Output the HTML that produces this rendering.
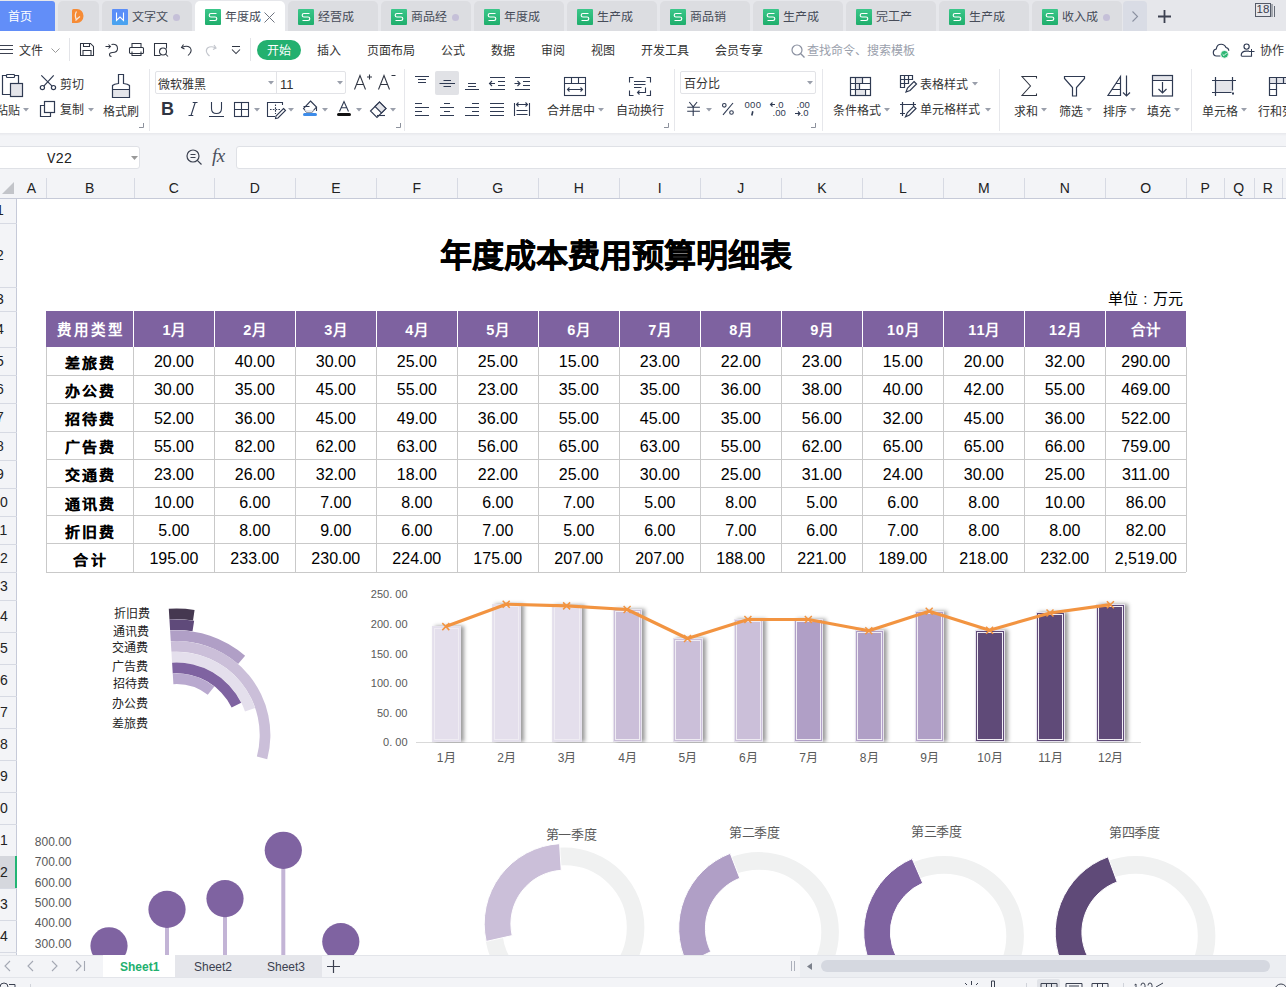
<!DOCTYPE html><html lang="zh-CN"><head><meta charset="utf-8"><style>
*{box-sizing:border-box;margin:0;padding:0}
html,body{width:1286px;height:987px;overflow:hidden;background:#fff;font-family:"Liberation Sans",sans-serif;color:#333}
.abs{position:absolute}
.t{position:absolute;white-space:nowrap;line-height:1}
svg{position:absolute;overflow:visible}

</style></head><body>
<div class="abs" style="left:0;top:0;width:1286px;height:31px;background:#e6e7eb"></div>
<div class="abs" style="left:0;top:1px;width:55px;height:30px;background:#628ef8;border-top-right-radius:3px"></div>
<div class="t" style="left:8px;top:11px;font-size:12px;color:#fff">首页</div>
<div class="abs" style="left:58px;top:1px;width:41px;height:30px;background:#dcdde1;border-radius:5px 5px 0 0"></div>
<svg style="left:71px;top:8px" width="13" height="15" viewBox="0 0 13 15"><path d="M2.5 1 H6 A6.5 7 0 0 1 6 15 H1 V2.5 Q1 1 2.5 1Z" fill="#f68b35"/><path d="M5.5 3.5 Q3.5 6.5 5 11 M4.5 12.5 Q7 10 9 8.5" stroke="#f6e6da" stroke-width="1.3" fill="none"/></svg>
<div class="abs" style="left:102px;top:1px;width:90px;height:30px;background:#dcdde1;border-radius:5px 5px 0 0"></div>
<div class="abs" style="left:112px;top:9px;width:16px;height:16px;background:linear-gradient(#5b8ef8 0,#5b8ef8 68%,#4aa2f0 68%);border-radius:1px"></div>
<svg style="left:112px;top:9px" width="16" height="16" viewBox="0 0 16 16"><path d="M4.5 3.5 V11.5 L8 8 L11.5 11.5 V3.5" stroke="#fff" stroke-width="1.1" fill="none"/></svg>
<div class="t" style="left:132px;top:10.8px;font-size:12px;color:#474c59;width:36px;overflow:hidden">文字文</div>
<div class="abs" style="left:173px;top:14px;width:7px;height:7px;border-radius:50%;background:#c5c0d8"></div>
<div class="abs" style="left:195px;top:1px;width:90px;height:30px;background:#ffffff;border-radius:5px 5px 0 0"></div>
<div class="abs" style="left:205px;top:9px;width:16px;height:16px;background:linear-gradient(#3bc78a,#1fae6c);border-radius:1px"></div>
<svg style="left:205px;top:9px" width="16" height="16" viewBox="0 0 16 16"><path d="M11.5 4.5 H6 Q4.2 4.5 4.2 6.2 Q4.2 8 6 8 H10 Q11.8 8 11.8 9.8 Q11.8 11.5 10 11.5 H4.5" stroke="#fff" stroke-width="1.15" fill="none"/></svg>
<div class="t" style="left:225px;top:10.8px;font-size:12px;color:#474c59;width:36px;overflow:hidden">年度成</div>
<svg style="left:264px;top:12px" width="11" height="11" viewBox="0 0 11 11"><path d="M0.5 0.5 L10.5 10.5 M10.5 0.5 L0.5 10.5" stroke="#6f7480" stroke-width="1"/></svg>
<div class="abs" style="left:288px;top:1px;width:90px;height:30px;background:#dcdde1;border-radius:5px 5px 0 0"></div>
<div class="abs" style="left:298px;top:9px;width:16px;height:16px;background:linear-gradient(#3bc78a,#1fae6c);border-radius:1px"></div>
<svg style="left:298px;top:9px" width="16" height="16" viewBox="0 0 16 16"><path d="M11.5 4.5 H6 Q4.2 4.5 4.2 6.2 Q4.2 8 6 8 H10 Q11.8 8 11.8 9.8 Q11.8 11.5 10 11.5 H4.5" stroke="#fff" stroke-width="1.15" fill="none"/></svg>
<div class="t" style="left:318px;top:10.8px;font-size:12px;color:#474c59;width:36px;overflow:hidden">经营成</div>
<div class="abs" style="left:381px;top:1px;width:90px;height:30px;background:#dcdde1;border-radius:5px 5px 0 0"></div>
<div class="abs" style="left:391px;top:9px;width:16px;height:16px;background:linear-gradient(#3bc78a,#1fae6c);border-radius:1px"></div>
<svg style="left:391px;top:9px" width="16" height="16" viewBox="0 0 16 16"><path d="M11.5 4.5 H6 Q4.2 4.5 4.2 6.2 Q4.2 8 6 8 H10 Q11.8 8 11.8 9.8 Q11.8 11.5 10 11.5 H4.5" stroke="#fff" stroke-width="1.15" fill="none"/></svg>
<div class="t" style="left:411px;top:10.8px;font-size:12px;color:#474c59;width:36px;overflow:hidden">商品经</div>
<div class="abs" style="left:452px;top:14px;width:7px;height:7px;border-radius:50%;background:#c5c0d8"></div>
<div class="abs" style="left:474px;top:1px;width:90px;height:30px;background:#dcdde1;border-radius:5px 5px 0 0"></div>
<div class="abs" style="left:484px;top:9px;width:16px;height:16px;background:linear-gradient(#3bc78a,#1fae6c);border-radius:1px"></div>
<svg style="left:484px;top:9px" width="16" height="16" viewBox="0 0 16 16"><path d="M11.5 4.5 H6 Q4.2 4.5 4.2 6.2 Q4.2 8 6 8 H10 Q11.8 8 11.8 9.8 Q11.8 11.5 10 11.5 H4.5" stroke="#fff" stroke-width="1.15" fill="none"/></svg>
<div class="t" style="left:504px;top:10.8px;font-size:12px;color:#474c59;width:36px;overflow:hidden">年度成</div>
<div class="abs" style="left:567px;top:1px;width:90px;height:30px;background:#dcdde1;border-radius:5px 5px 0 0"></div>
<div class="abs" style="left:577px;top:9px;width:16px;height:16px;background:linear-gradient(#3bc78a,#1fae6c);border-radius:1px"></div>
<svg style="left:577px;top:9px" width="16" height="16" viewBox="0 0 16 16"><path d="M11.5 4.5 H6 Q4.2 4.5 4.2 6.2 Q4.2 8 6 8 H10 Q11.8 8 11.8 9.8 Q11.8 11.5 10 11.5 H4.5" stroke="#fff" stroke-width="1.15" fill="none"/></svg>
<div class="t" style="left:597px;top:10.8px;font-size:12px;color:#474c59;width:36px;overflow:hidden">生产成</div>
<div class="abs" style="left:660px;top:1px;width:90px;height:30px;background:#dcdde1;border-radius:5px 5px 0 0"></div>
<div class="abs" style="left:670px;top:9px;width:16px;height:16px;background:linear-gradient(#3bc78a,#1fae6c);border-radius:1px"></div>
<svg style="left:670px;top:9px" width="16" height="16" viewBox="0 0 16 16"><path d="M11.5 4.5 H6 Q4.2 4.5 4.2 6.2 Q4.2 8 6 8 H10 Q11.8 8 11.8 9.8 Q11.8 11.5 10 11.5 H4.5" stroke="#fff" stroke-width="1.15" fill="none"/></svg>
<div class="t" style="left:690px;top:10.8px;font-size:12px;color:#474c59;width:36px;overflow:hidden">商品销</div>
<div class="abs" style="left:753px;top:1px;width:90px;height:30px;background:#dcdde1;border-radius:5px 5px 0 0"></div>
<div class="abs" style="left:763px;top:9px;width:16px;height:16px;background:linear-gradient(#3bc78a,#1fae6c);border-radius:1px"></div>
<svg style="left:763px;top:9px" width="16" height="16" viewBox="0 0 16 16"><path d="M11.5 4.5 H6 Q4.2 4.5 4.2 6.2 Q4.2 8 6 8 H10 Q11.8 8 11.8 9.8 Q11.8 11.5 10 11.5 H4.5" stroke="#fff" stroke-width="1.15" fill="none"/></svg>
<div class="t" style="left:783px;top:10.8px;font-size:12px;color:#474c59;width:36px;overflow:hidden">生产成</div>
<div class="abs" style="left:846px;top:1px;width:90px;height:30px;background:#dcdde1;border-radius:5px 5px 0 0"></div>
<div class="abs" style="left:856px;top:9px;width:16px;height:16px;background:linear-gradient(#3bc78a,#1fae6c);border-radius:1px"></div>
<svg style="left:856px;top:9px" width="16" height="16" viewBox="0 0 16 16"><path d="M11.5 4.5 H6 Q4.2 4.5 4.2 6.2 Q4.2 8 6 8 H10 Q11.8 8 11.8 9.8 Q11.8 11.5 10 11.5 H4.5" stroke="#fff" stroke-width="1.15" fill="none"/></svg>
<div class="t" style="left:876px;top:10.8px;font-size:12px;color:#474c59;width:36px;overflow:hidden">完工产</div>
<div class="abs" style="left:939px;top:1px;width:90px;height:30px;background:#dcdde1;border-radius:5px 5px 0 0"></div>
<div class="abs" style="left:949px;top:9px;width:16px;height:16px;background:linear-gradient(#3bc78a,#1fae6c);border-radius:1px"></div>
<svg style="left:949px;top:9px" width="16" height="16" viewBox="0 0 16 16"><path d="M11.5 4.5 H6 Q4.2 4.5 4.2 6.2 Q4.2 8 6 8 H10 Q11.8 8 11.8 9.8 Q11.8 11.5 10 11.5 H4.5" stroke="#fff" stroke-width="1.15" fill="none"/></svg>
<div class="t" style="left:969px;top:10.8px;font-size:12px;color:#474c59;width:36px;overflow:hidden">生产成</div>
<div class="abs" style="left:1032px;top:1px;width:90px;height:30px;background:#dcdde1;border-radius:5px 5px 0 0"></div>
<div class="abs" style="left:1042px;top:9px;width:16px;height:16px;background:linear-gradient(#3bc78a,#1fae6c);border-radius:1px"></div>
<svg style="left:1042px;top:9px" width="16" height="16" viewBox="0 0 16 16"><path d="M11.5 4.5 H6 Q4.2 4.5 4.2 6.2 Q4.2 8 6 8 H10 Q11.8 8 11.8 9.8 Q11.8 11.5 10 11.5 H4.5" stroke="#fff" stroke-width="1.15" fill="none"/></svg>
<div class="t" style="left:1062px;top:10.8px;font-size:12px;color:#474c59;width:36px;overflow:hidden">收入成</div>
<div class="abs" style="left:1103px;top:14px;width:7px;height:7px;border-radius:50%;background:#c5c0d8"></div>
<div class="abs" style="left:1123px;top:1px;width:24px;height:30px;background:#d9dce5;border-radius:4px 4px 0 0"></div>
<svg style="left:1132px;top:11px" width="6" height="11" viewBox="0 0 6 11"><path d="M0.5 0.5 L5.5 5.5 L0.5 10.5" stroke="#8a90a0" stroke-width="1.1" fill="none"/></svg>
<svg style="left:1158px;top:10px" width="13" height="13" viewBox="0 0 13 13"><path d="M6.5 0 V13 M0 6.5 H13" stroke="#3c4150" stroke-width="1.8"/></svg>
<div class="abs" style="left:1255px;top:3px;width:16px;height:14px;border:1px solid #555b68"></div>
<div class="t" style="left:1256.5px;top:4px;font-size:11.5px;color:#3c4150">18</div>
<svg style="left:1271px;top:4px" width="5" height="13" viewBox="0 0 5 13"><path d="M1 0 V13 M3.5 2 V13" stroke="#555b68" stroke-width="0.9"/></svg>
<div class="abs" style="left:0;top:31px;width:1286px;height:102px;background:#fff"></div>
<svg style="left:0;top:45px" width="13" height="11" viewBox="0 0 13 11"><path d="M0 0.5 H13 M0 4.5 H13 M0 8.5 H13" stroke="#3c4150" stroke-width="1.1"/></svg>
<div class="t" style="left:19px;top:44.7px;font-size:12px;color:#333">文件</div>
<svg style="left:51px;top:48px" width="9" height="6" viewBox="0 0 9 6"><path d="M0.5 0.5 L4.5 4.5 L8.5 0.5" stroke="#999" stroke-width="1" fill="none"/></svg>
<div class="abs" style="left:69px;top:38px;width:1px;height:23px;background:#e3e4e8"></div>
<div class="abs" style="left:250px;top:38px;width:1px;height:23px;background:#e3e4e8"></div>
<div class="abs" style="left:257px;top:40px;width:44px;height:20px;background:#23b06f;border-radius:10px"></div>
<div class="t" style="left:267px;top:44.7px;font-size:12px;color:#fff">开始</div>
<div class="t" style="left:317px;top:44.7px;font-size:12px;color:#333">插入</div>
<div class="t" style="left:367px;top:44.7px;font-size:12px;color:#333">页面布局</div>
<div class="t" style="left:441px;top:44.7px;font-size:12px;color:#333">公式</div>
<div class="t" style="left:491px;top:44.7px;font-size:12px;color:#333">数据</div>
<div class="t" style="left:541px;top:44.7px;font-size:12px;color:#333">审阅</div>
<div class="t" style="left:591px;top:44.7px;font-size:12px;color:#333">视图</div>
<div class="t" style="left:641px;top:44.7px;font-size:12px;color:#333">开发工具</div>
<div class="t" style="left:715px;top:44.7px;font-size:12px;color:#333">会员专享</div>
<svg style="left:791px;top:44px" width="14" height="14" viewBox="0 0 14 14"><circle cx="6" cy="6" r="5" stroke="#8a90a0" stroke-width="1.2" fill="none"/><path d="M9.8 9.8 L13.5 13.5" stroke="#8a90a0" stroke-width="1.3"/></svg>
<div class="t" style="left:807px;top:44.7px;font-size:12px;color:#9aa0ac">查找命令、搜索模板</div>
<div class="t" style="left:1260px;top:44.7px;font-size:12px;color:#333">协作</div>
<svg style="left:80px;top:43px" width="15" height="14" viewBox="0 0 15 14" fill="none" stroke="#2f3542" stroke-width="1.05"><g transform="translate(-0.5 -0.5)"><path d="M1 1 H11 L14 4 V13 H1 Z"/><path d="M3.5 13 V8 H11.5 V13"/><path d="M4 1 V4 H10 V1"/></g></svg>
<svg style="left:105px;top:43px" width="15" height="15" viewBox="0 0 15 15" fill="none" stroke="#2f3542" stroke-width="1.05"><g transform="translate(-0.5 -0.5)"><path d="M1 4 H6 M4 2 L6 4 L4 6"/><path d="M7 2 Q13 1 13 6 Q13 10 8 10 Q5 10 5 12 Q5 14 7 14"/></g></svg>
<svg style="left:129px;top:43px" width="16" height="14" viewBox="0 0 16 14" fill="none" stroke="#2f3542" stroke-width="1.05"><g transform="translate(-0.5 -0.5)"><rect x="1" y="5" width="14" height="6" rx="1"/><path d="M3.5 5 V1 H12.5 V5 M3.5 9 V13 H12.5 V9"/></g></svg>
<svg style="left:154px;top:43px" width="16" height="15" viewBox="0 0 16 15" fill="none" stroke="#2f3542" stroke-width="1.05"><g transform="translate(-0.5 -0.5)"><path d="M7 13 H1 V1 H13 V6"/><circle cx="9.5" cy="9" r="3.5"/><path d="M12 11.5 L14.5 14"/></g></svg>
<svg style="left:181px;top:44px" width="12" height="12" viewBox="0 0 12 12" fill="none" stroke="#2f3542" stroke-width="1.05"><g transform="translate(-0.5 -0.5)"><path d="M3 1 L1 4 L4 5.5"/><path d="M1.5 4 Q6 1.5 9.5 4 Q12 7 9 10.5 L7.5 12" /></g></svg>
<svg style="left:205px;top:44px" width="12" height="12" viewBox="0 0 12 12" fill="none" stroke="#c3c6cd" stroke-width="1.2"><path d="M9 1 L11 4 L8 5.5"/><path d="M10.5 4 Q6 1.5 2.5 4 Q0 7 3 10.5 L4.5 12"/></svg>
<svg style="left:232px;top:46px" width="9" height="9" viewBox="0 0 9 9" fill="none" stroke="#2f3542" stroke-width="1.05"><g transform="translate(-0.5 -0.5)"><path d="M0.5 1 H8.5"/><path d="M0.5 4 L4.5 8 L8.5 4"/></g></svg>
<svg style="left:0;top:0" width="400" height="140" viewBox="0 0 400 140" fill="none" stroke="#2f3a52" stroke-width="1.2"><path d="M10.5 94.5 H2.5 V75.5 H6.5 M14.5 75.5 H18.5 V83.5"/><rect x="6.5" y="74.5" width="8" height="3" rx="0.8"/><rect x="10.5" y="83.5" width="12" height="13" fill="#e4e5ea"/><path d="M41.3 75.3 L52.1 86.1 M53.7 75.3 L43.8 86.1"/><circle cx="42.4" cy="87.6" r="2.1"/><circle cx="53.5" cy="87.6" r="2.1"/><rect x="113" y="90" width="16" height="7" fill="#e4e5ea" stroke="none"/><path d="M118.5 83.5 V74.5 H123.5 V83.5 Q128 84 129.5 85.5 V97.5 H112.5 V85.5 Q114 84 118.5 83.5 Z M112.5 89.5 H129.5"/><rect x="44.5" y="101.5" width="10" height="11"/><path d="M44.5 105.5 H40.5 V116.5 H50.5 V112.5"/></svg>
<div class="t" style="left:-4px;top:104.5px;font-size:12px;color:#333;">粘贴</div>
<svg style="left:23px;top:108px" width="6" height="4" viewBox="0 0 6 4"><path d="M0 0 H6 L3 3.5Z" fill="#9a9fab"/></svg>
<div class="t" style="left:60px;top:78.5px;font-size:12px;color:#333;">剪切</div>
<div class="t" style="left:60px;top:103.5px;font-size:12px;color:#333;">复制</div>
<svg style="left:88px;top:108px" width="6" height="4" viewBox="0 0 6 4"><path d="M0 0 H6 L3 3.5Z" fill="#9a9fab"/></svg>
<div class="t" style="left:103px;top:105.5px;font-size:12px;color:#333;">格式刷</div>
<svg style="left:139px;top:123px" width="5" height="5" viewBox="0 0 5 5"><path d="M4.5 0 V4.5 H0" stroke="#8c919c" stroke-width="1" fill="none"/></svg>
<div class="abs" style="left:149px;top:69px;width:1px;height:62px;background:#e6e7eb"></div>
<div class="abs" style="left:155px;top:71px;width:191px;height:23px;border:1px solid #e2e3e7;border-radius:2px"></div>
<div class="abs" style="left:276px;top:71px;width:1px;height:23px;background:#e2e3e7"></div>
<div class="t" style="left:158px;top:78.5px;font-size:12px;color:#333;">微软雅黑</div>
<svg style="left:268px;top:81px" width="6" height="4" viewBox="0 0 6 4"><path d="M0 0 H6 L3 3.5Z" fill="#9a9fab"/></svg>
<svg style="left:337px;top:81px" width="6" height="4" viewBox="0 0 6 4"><path d="M0 0 H6 L3 3.5Z" fill="#9a9fab"/></svg>
<div class="t" style="left:280px;top:77.5px;font-size:13px;color:#333;">11</div>
<svg style="left:354px;top:73px" width="18" height="18" viewBox="0 0 18 18" fill="none" stroke="#2f3542" stroke-width="1.05"><g transform="translate(-0.5 -0.5)"><path d="M1 17 L6.5 3 L12 17 M3 12 H10"/><path d="M13.5 4.5 H18.5 M16 2 V7" stroke-width="1.1"/></g></svg>
<svg style="left:378px;top:73px" width="18" height="18" viewBox="0 0 18 18" fill="none" stroke="#2f3542" stroke-width="1.05"><g transform="translate(-0.5 -0.5)"><path d="M1 17 L6.5 3 L12 17 M3 12 H10"/><path d="M14 3 H18" stroke-width="1"/></g></svg>
<div class="t" style="left:161px;top:100.0px;font-size:18px;color:#2f3542;font-weight:bold">B</div>
<svg style="left:0;top:0" width="400" height="140" viewBox="0 0 400 140" fill="none" stroke="#2f3a52" stroke-width="1.1"><path d="M191 115.5 L195.2 102.5 M192.7 102.5 H197.5 M188.5 115.5 H193.3"/><path d="M211.5 102 V108.5 Q211.5 113.5 216.5 113.5 Q221.5 113.5 221.5 108.5 V102 M209 116.5 H224"/><rect x="234.5" y="102.5" width="14" height="14"/><path d="M241.5 102.5 V116.5 M234.5 109.5 H248.5"/><path d="M275 116.5 H267.5 V102.5 H282.5 V105"/><path d="M270 109.5 H280 M275.5 104.5 V114" stroke-dasharray="1.6 1.2"/><path d="M283.5 108.5 L285.5 110.5 L278 118 L275.5 118.5 L276 116 Z" fill="#fff"/><path d="M310.5 101 L316.5 107 L312 112 H306.5 L303.5 108.5 Z" fill="#fff"/><path d="M304.5 110 L306.5 112 H312 L314 110Z" fill="#e4e5ea" stroke="none"/><path d="M303.5 106.5 H309.5 M316.5 107 V111"/><path d="M339.5 111.5 L344 101.5 L348.5 111.5 M341.2 107.8 H346.8"/><path d="M370.5 111 L379.5 102 L386 108.5 L377 117.5 Z" fill="#fff"/><path d="M375 106.5 L379.5 102 L386 108.5 L381.5 113 Z" fill="#e4e5ea"/><path d="M377 115.5 H385"/></svg>
<div class="abs" style="left:303px;top:113px;width:14px;height:3px;background:#3d8ce9;border-radius:1.5px"></div>
<div class="abs" style="left:337px;top:113px;width:14px;height:3px;background:#111;border-radius:1.5px"></div>
<svg style="left:254px;top:108px" width="6" height="4" viewBox="0 0 6 4"><path d="M0 0 H6 L3 3.5Z" fill="#9a9fab"/></svg>
<svg style="left:288px;top:108px" width="6" height="4" viewBox="0 0 6 4"><path d="M0 0 H6 L3 3.5Z" fill="#9a9fab"/></svg>
<svg style="left:322px;top:108px" width="6" height="4" viewBox="0 0 6 4"><path d="M0 0 H6 L3 3.5Z" fill="#9a9fab"/></svg>
<svg style="left:356px;top:108px" width="6" height="4" viewBox="0 0 6 4"><path d="M0 0 H6 L3 3.5Z" fill="#9a9fab"/></svg>
<svg style="left:390px;top:108px" width="6" height="4" viewBox="0 0 6 4"><path d="M0 0 H6 L3 3.5Z" fill="#9a9fab"/></svg>
<svg style="left:396px;top:123px" width="5" height="5" viewBox="0 0 5 5"><path d="M4.5 0 V4.5 H0" stroke="#8c919c" stroke-width="1" fill="none"/></svg>
<div class="abs" style="left:404px;top:69px;width:1px;height:62px;background:#e6e7eb"></div>
<div class="abs" style="left:435px;top:71px;width:24px;height:24px;background:#e1e2e6;border-radius:2px"></div>
<svg style="left:0;top:0" width="600" height="140" viewBox="0 0 600 140" fill="none" stroke="#2f3a52" stroke-width="1.1"><path d="M415 76.5 H429 M418 79.5 H426 M418 82.5 H426 M443.5 80.5 H451 M439.5 83.5 H455 M443.5 86.5 H451 M468 83.5 H476 M468 86.5 H476 M465 89.5 H479 M490 77.5 H505 M498 81.5 H505 M498 85.5 H505 M490 89.5 H505 M489.5 83.5 H495 M492 81 L489.5 83.5 L492 86 M515 77.5 H530 M523 81.5 H530 M523 85.5 H530 M515 89.5 H530 M514.5 83.5 H520 M517.5 81 L520 83.5 L517.5 86 M415 103.5 H422 M415 107.5 H429 M415 111.5 H422 M415 115.5 H429 M444 103.5 H450 M440 107.5 H454 M444 111.5 H450 M440 115.5 H454 M472 103.5 H479 M465 107.5 H479 M472 111.5 H479 M465 115.5 H479 M490 103.5 H504 M490 107.5 H504 M490 111.5 H504 M490 115.5 H504 M514.5 103 V116 M529.5 103 V116 M516.5 110.5 H527.5 M516.5 114.5 H527.5 M516.5 104.5 H527.5 M518.5 102.5 L516.5 104.5 L518.5 106.5 M525.5 102.5 L527.5 104.5 L525.5 106.5"/></svg>
<svg style="left:0;top:0" width="700" height="140" viewBox="0 0 700 140" fill="none" stroke="#2f3a52" stroke-width="1.1"><rect x="564.5" y="77.5" width="21" height="18"/><path d="M564.5 83.5 H585.5 M571.5 77.5 V83.5 M578.5 77.5 V83.5 M567.5 89.5 H582.5 M569.5 87.5 L567.5 89.5 L569.5 91.5 M580.5 87.5 L582.5 89.5 L580.5 91.5"/><path d="M633.5 77.5 H629.5 V82.5 M646.5 77.5 H650.5 V82.5 M629.5 90.5 V95.5 H633.5 M650.5 90.5 V95.5 H646.5"/><path d="M634 81.5 H645.5 M634 84.5 H645.5 M634 87.5 H641.5 M645.5 87.5 V92.5 H637.5 M639.5 90.5 L637.5 92.5 L639.5 94.5"/></svg>
<div class="t" style="left:547px;top:104.5px;font-size:12px;color:#333;">合并居中</div>
<svg style="left:598px;top:108px" width="6" height="4" viewBox="0 0 6 4"><path d="M0 0 H6 L3 3.5Z" fill="#9a9fab"/></svg>
<div class="t" style="left:616px;top:104.5px;font-size:12px;color:#333;">自动换行</div>
<svg style="left:664px;top:123px" width="5" height="5" viewBox="0 0 5 5"><path d="M4.5 0 V4.5 H0" stroke="#8c919c" stroke-width="1" fill="none"/></svg>
<div class="abs" style="left:674px;top:69px;width:1px;height:62px;background:#e6e7eb"></div>
<div class="abs" style="left:680px;top:71px;width:136px;height:23px;border:1px solid #e2e3e7;border-radius:2px"></div>
<div class="t" style="left:684px;top:77.5px;font-size:12px;color:#333;">百分比</div>
<svg style="left:807px;top:81px" width="6" height="4" viewBox="0 0 6 4"><path d="M0 0 H6 L3 3.5Z" fill="#9a9fab"/></svg>
<svg style="left:706px;top:108px" width="6" height="4" viewBox="0 0 6 4"><path d="M0 0 H6 L3 3.5Z" fill="#9a9fab"/></svg>
<svg style="left:0;top:0" width="900" height="140" viewBox="0 0 900 140" fill="none" stroke="#2f3a52" stroke-width="1.1"><path d="M689.3 102 L693.2 106.8 L697.1 102 M687.2 107.2 H699.9 M687.2 111.3 H699.9 M693.2 107 V116"/><circle cx="724.3" cy="105.3" r="1.8"/><circle cx="731.5" cy="112.5" r="1.8"/><path d="M733 103 L723 114.8"/><path d="M751.8 115.5 L752.8 111.2" stroke-width="1.6"/><path d="M770.5 104.5 H775 M772.5 102.5 L770.5 104.5 L772.5 106.5 M795 113.5 H800 M798 111.5 L800 113.5 L798 115.5"/></svg>
<div class="t" style="left:744.5px;top:99.8px;font-size:9.5px;color:#2f3a52;letter-spacing:0.3px;font-family:'Liberation Sans',sans-serif">000</div>
<div class="t" style="left:775.5px;top:99.8px;font-size:9.5px;color:#2f3a52;font-family:'Liberation Sans',sans-serif">.0</div>
<div class="t" style="left:772.5px;top:108.4px;font-size:9.5px;color:#2f3a52;font-family:'Liberation Sans',sans-serif">.00</div>
<div class="t" style="left:796.5px;top:99.8px;font-size:9.5px;color:#2f3a52;font-family:'Liberation Sans',sans-serif">.00</div>
<div class="t" style="left:800.5px;top:108.4px;font-size:9.5px;color:#2f3a52;font-family:'Liberation Sans',sans-serif">.0</div>
<svg style="left:811px;top:123px" width="5" height="5" viewBox="0 0 5 5"><path d="M4.5 0 V4.5 H0" stroke="#8c919c" stroke-width="1" fill="none"/></svg>
<div class="abs" style="left:822px;top:69px;width:1px;height:62px;background:#e6e7eb"></div>
<svg style="left:0;top:0" width="1286" height="140" viewBox="0 0 1286 140" fill="none" stroke="#2f3a52" stroke-width="1.2"><path d="M856.5 78 H862 V83 H856.5Z M856.5 84 H859 V89 H856.5Z M856.5 90 H864.5 V95 H856.5Z" fill="#e4e5ea" stroke="none"/><rect x="850.5" y="77.5" width="20" height="18"/><path d="M850.5 83.5 H870.5 M850.5 89.5 H870.5 M855.5 77.5 V95.5 M862.5 77.5 V83.5 M859.5 83.5 V89.5 M865.5 89.5 V95.5"/><path d="M900.5 75.5 H912.5 V79.5 H908.5 V83.5 H904.5 V87.5 H900.5Z M900.5 79.5 H908.5 M900.5 83.5 H904.5 M904.5 75.5 V83.5 M908.5 75.5 V79.5"/><path d="M914 81.5 L916.5 84 L910 90.5 L906 92 L907.5 88Z" fill="#fff"/><path d="M900 104.5 H916 M902.5 102 V116 M900 113.5 H905 M913.5 102 V106"/><path d="M913.8 106.3 L916 108.5 L909.5 115 L905.5 116.8 L907.3 112.8Z" fill="#fff"/></svg>
<div class="t" style="left:833px;top:104.5px;font-size:12px;color:#333;">条件格式</div>
<svg style="left:884px;top:108px" width="6" height="4" viewBox="0 0 6 4"><path d="M0 0 H6 L3 3.5Z" fill="#9a9fab"/></svg>
<div class="t" style="left:920px;top:78.5px;font-size:12px;color:#333;">表格样式</div>
<svg style="left:972px;top:82px" width="6" height="4" viewBox="0 0 6 4"><path d="M0 0 H6 L3 3.5Z" fill="#9a9fab"/></svg>
<div class="t" style="left:920px;top:103.5px;font-size:12px;color:#333;">单元格样式</div>
<svg style="left:985px;top:108px" width="6" height="4" viewBox="0 0 6 4"><path d="M0 0 H6 L3 3.5Z" fill="#9a9fab"/></svg>
<div class="abs" style="left:999px;top:69px;width:1px;height:62px;background:#e6e7eb"></div>
<svg style="left:1021px;top:76px" width="18" height="21" viewBox="0 0 18 21" fill="none" stroke="#2f3542" stroke-width="1.05"><g transform="translate(-0.5 -0.5)"><path d="M16 3 V1 H1.5 L10 10.5 L1.5 20 H16 V18"/></g></svg>
<div class="t" style="left:1014px;top:105.5px;font-size:12px;color:#333;">求和</div>
<svg style="left:1041px;top:108px" width="6" height="4" viewBox="0 0 6 4"><path d="M0 0 H6 L3 3.5Z" fill="#9a9fab"/></svg>
<svg style="left:0;top:0" width="1286" height="140" viewBox="0 0 1286 140" fill="none" stroke="#2f3a52" stroke-width="1.2"><path d="M1064.5 76.5 H1084.5 V78.5 L1076.5 87.5 V96 H1072.5 V87.5 L1064.5 78.5 Z"/><path d="M1120.5 76.5 L1108 95.5 H1120.5 Z M1115.5 83.5 H1120.5 M1111.5 89.5 H1120.5"/><path d="M1126.5 75.5 V96 M1123 92.5 L1126.5 96 L1130 92.5"/><rect x="1153" y="76" width="19" height="4.5" fill="#e4e5ea" stroke="none"/><rect x="1152.5" y="75.5" width="20" height="20.5"/><path d="M1152.5 80.5 H1172.5 M1162.5 82 V93 M1158.5 89 L1162.5 93 L1166.5 89"/></svg>
<div class="t" style="left:1059px;top:105.5px;font-size:12px;color:#333;">筛选</div>
<svg style="left:1086px;top:108px" width="6" height="4" viewBox="0 0 6 4"><path d="M0 0 H6 L3 3.5Z" fill="#9a9fab"/></svg>
<div class="t" style="left:1103px;top:105.5px;font-size:12px;color:#333;">排序</div>
<svg style="left:1130px;top:108px" width="6" height="4" viewBox="0 0 6 4"><path d="M0 0 H6 L3 3.5Z" fill="#9a9fab"/></svg>
<div class="t" style="left:1147px;top:105.5px;font-size:12px;color:#333;">填充</div>
<svg style="left:1174px;top:108px" width="6" height="4" viewBox="0 0 6 4"><path d="M0 0 H6 L3 3.5Z" fill="#9a9fab"/></svg>
<div class="abs" style="left:1191px;top:69px;width:1px;height:62px;background:#e6e7eb"></div>
<svg style="left:0;top:0" width="1286" height="140" viewBox="0 0 1286 140" fill="none" stroke="#2f3a52" stroke-width="1.2"><rect x="1215.5" y="80.5" width="17" height="12" fill="#e4e5ea" stroke="none"/><path d="M1212 80.5 H1236 M1212 92.5 H1231.5 M1215.5 77 V96 M1232.5 77 V90.5"/><rect x="1232" y="92.5" width="2" height="2" fill="#2f3a52" stroke="none"/><rect x="1270" y="78" width="20" height="5" fill="#e4e5ea" stroke="none"/><path d="M1290 77.5 H1269.5 V95.5 H1276.5 V77.5 M1269.5 83.5 H1290 M1269.5 89.5 H1276.5 M1283.5 77.5 V83.5"/></svg>
<div class="t" style="left:1202px;top:105.5px;font-size:12px;color:#333;">单元格</div>
<svg style="left:1241px;top:108px" width="6" height="4" viewBox="0 0 6 4"><path d="M0 0 H6 L3 3.5Z" fill="#9a9fab"/></svg>
<div class="t" style="left:1258px;top:105.5px;font-size:12px;color:#333;">行和列</div>
<svg style="left:0;top:0" width="1286" height="70" viewBox="0 0 1286 70" fill="none" stroke="#2f3a52" stroke-width="1.15"><path d="M1220.5 56 H1216.5 Q1213.3 56 1213.3 52.6 Q1213.3 49.5 1216.3 49 Q1216.8 44.2 1221.2 44.2 Q1224.6 44.2 1226 47.5 Q1228.8 48.2 1228.8 50.8"/><circle cx="1224.5" cy="54.3" r="3.9" fill="#2cb673" stroke="#fff" stroke-width="0.8"/><path d="M1222.6 54.3 L1224 55.6 L1226.6 53" stroke="#fff" stroke-width="0.9"/><circle cx="1246.6" cy="46.6" r="2.6"/><path d="M1251.5 54 V56.2 H1242 Q1241.2 56.2 1241.2 55.3 Q1241.2 51.1 1246.4 51.1 H1249"/><path d="M1251.5 49 V54 M1249 51.5 H1254.5" stroke-width="1"/></svg>
<div class="abs" style="left:0;top:133px;width:1286px;height:45px;background:#f3f4f7"></div>
<div class="abs" style="left:0;top:133px;width:1286px;height:3px;background:linear-gradient(#e7e8ec,#f3f4f7)"></div>
<div class="abs" style="left:-5px;top:146px;width:145px;height:23px;background:#fff;border:1px solid #dfe1e6;border-radius:3px"></div>
<div class="t" style="left:47px;top:152px;font-size:14px;color:#222;font-family:'Liberation Mono',monospace">V22</div>
<svg style="left:131px;top:156px" width="7" height="4" viewBox="0 0 7 4"><path d="M0 0 H7 L3.5 4Z" fill="#999"/></svg>
<svg style="left:186px;top:149px" width="17" height="17" viewBox="0 0 17 17" fill="none" stroke="#3b4150" stroke-width="1.2"><circle cx="7" cy="7" r="6"/><path d="M4.5 5.5 H9.5 M4.5 8.5 H9.5 M11.3 11.3 L15.5 15.5"/></svg>
<div class="t" style="left:212px;top:146px;font-size:19px;font-style:italic;color:#4a4f5c;font-family:'Liberation Serif',serif;letter-spacing:-0.5px">fx</div>
<div class="abs" style="left:236px;top:146px;width:1060px;height:23px;background:#fff;border:1px solid #dfe1e6;border-radius:3px"></div>
<div class="abs" style="left:0;top:178px;width:1286px;height:21px;background:#f3f4f7;border-bottom:1px solid #c6cad8"></div>
<svg style="left:2px;top:182px" width="12" height="12" viewBox="0 0 12 12"><path d="M12 0 V12 H0Z" fill="#c2c4c9"/></svg>
<div class="abs" style="left:46.0px;top:178px;width:1px;height:20px;background:#d7dae3"></div>
<div class="t" style="left:17.0px;top:180.7px;width:29.0px;text-align:center;font-size:14px;color:#222">A</div>
<div class="abs" style="left:133.5px;top:178px;width:1px;height:20px;background:#d7dae3"></div>
<div class="t" style="left:46.0px;top:180.7px;width:87.5px;text-align:center;font-size:14px;color:#222">B</div>
<div class="abs" style="left:214.3px;top:178px;width:1px;height:20px;background:#d7dae3"></div>
<div class="t" style="left:133.5px;top:180.7px;width:80.8px;text-align:center;font-size:14px;color:#222">C</div>
<div class="abs" style="left:295.3px;top:178px;width:1px;height:20px;background:#d7dae3"></div>
<div class="t" style="left:214.3px;top:180.7px;width:81.0px;text-align:center;font-size:14px;color:#222">D</div>
<div class="abs" style="left:376.3px;top:178px;width:1px;height:20px;background:#d7dae3"></div>
<div class="t" style="left:295.3px;top:180.7px;width:81.0px;text-align:center;font-size:14px;color:#222">E</div>
<div class="abs" style="left:457.3px;top:178px;width:1px;height:20px;background:#d7dae3"></div>
<div class="t" style="left:376.3px;top:180.7px;width:81.0px;text-align:center;font-size:14px;color:#222">F</div>
<div class="abs" style="left:538.3px;top:178px;width:1px;height:20px;background:#d7dae3"></div>
<div class="t" style="left:457.3px;top:180.7px;width:81.0px;text-align:center;font-size:14px;color:#222">G</div>
<div class="abs" style="left:619.3px;top:178px;width:1px;height:20px;background:#d7dae3"></div>
<div class="t" style="left:538.3px;top:180.7px;width:81.0px;text-align:center;font-size:14px;color:#222">H</div>
<div class="abs" style="left:700.3px;top:178px;width:1px;height:20px;background:#d7dae3"></div>
<div class="t" style="left:619.3px;top:180.7px;width:81.0px;text-align:center;font-size:14px;color:#222">I</div>
<div class="abs" style="left:781.3px;top:178px;width:1px;height:20px;background:#d7dae3"></div>
<div class="t" style="left:700.3px;top:180.7px;width:81.0px;text-align:center;font-size:14px;color:#222">J</div>
<div class="abs" style="left:862.3px;top:178px;width:1px;height:20px;background:#d7dae3"></div>
<div class="t" style="left:781.3px;top:180.7px;width:81.0px;text-align:center;font-size:14px;color:#222">K</div>
<div class="abs" style="left:943.3px;top:178px;width:1px;height:20px;background:#d7dae3"></div>
<div class="t" style="left:862.3px;top:180.7px;width:81.0px;text-align:center;font-size:14px;color:#222">L</div>
<div class="abs" style="left:1024.3px;top:178px;width:1px;height:20px;background:#d7dae3"></div>
<div class="t" style="left:943.3px;top:180.7px;width:81.0px;text-align:center;font-size:14px;color:#222">M</div>
<div class="abs" style="left:1105.3px;top:178px;width:1px;height:20px;background:#d7dae3"></div>
<div class="t" style="left:1024.3px;top:180.7px;width:81.0px;text-align:center;font-size:14px;color:#222">N</div>
<div class="abs" style="left:1186.3px;top:178px;width:1px;height:20px;background:#d7dae3"></div>
<div class="t" style="left:1105.3px;top:180.7px;width:81.0px;text-align:center;font-size:14px;color:#222">O</div>
<div class="abs" style="left:1224.1px;top:178px;width:1px;height:20px;background:#d7dae3"></div>
<div class="t" style="left:1186.3px;top:180.7px;width:37.8px;text-align:center;font-size:14px;color:#222">P</div>
<div class="abs" style="left:1253.5px;top:178px;width:1px;height:20px;background:#d7dae3"></div>
<div class="t" style="left:1224.1px;top:180.7px;width:29.4px;text-align:center;font-size:14px;color:#222">Q</div>
<div class="abs" style="left:1282.0px;top:178px;width:1px;height:20px;background:#d7dae3"></div>
<div class="t" style="left:1253.5px;top:180.7px;width:28.5px;text-align:center;font-size:14px;color:#222">R</div>
<div class="abs" style="left:1330.0px;top:178px;width:1px;height:20px;background:#d7dae3"></div>
<div class="t" style="left:1282.0px;top:180.7px;width:48.0px;text-align:center;font-size:14px;color:#222">S</div>
<div class="abs" style="left:0;top:199px;width:17px;height:756px;background:#f3f4f7;border-right:1px solid #c6cad8"></div>
<div class="abs" style="left:0;top:222.5px;width:17px;height:1px;background:#d7dae3"></div>
<div class="t" style="left:-24px;top:203.2px;width:48px;text-align:center;font-size:14px;color:#222">1</div>
<div class="abs" style="left:0;top:286.6px;width:17px;height:1px;background:#d7dae3"></div>
<div class="t" style="left:-24px;top:247.6px;width:48px;text-align:center;font-size:14px;color:#222">2</div>
<div class="abs" style="left:0;top:310.5px;width:17px;height:1px;background:#d7dae3"></div>
<div class="t" style="left:-24px;top:291.6px;width:48px;text-align:center;font-size:14px;color:#222">3</div>
<div class="abs" style="left:0;top:347.1px;width:17px;height:1px;background:#d7dae3"></div>
<div class="t" style="left:-24px;top:321.8px;width:48px;text-align:center;font-size:14px;color:#222">4</div>
<div class="abs" style="left:0;top:375.2px;width:17px;height:1px;background:#d7dae3"></div>
<div class="t" style="left:-24px;top:354.2px;width:48px;text-align:center;font-size:14px;color:#222">5</div>
<div class="abs" style="left:0;top:403.3px;width:17px;height:1px;background:#d7dae3"></div>
<div class="t" style="left:-24px;top:382.3px;width:48px;text-align:center;font-size:14px;color:#222">6</div>
<div class="abs" style="left:0;top:431.5px;width:17px;height:1px;background:#d7dae3"></div>
<div class="t" style="left:-24px;top:410.4px;width:48px;text-align:center;font-size:14px;color:#222">7</div>
<div class="abs" style="left:0;top:459.6px;width:17px;height:1px;background:#d7dae3"></div>
<div class="t" style="left:-24px;top:438.5px;width:48px;text-align:center;font-size:14px;color:#222">8</div>
<div class="abs" style="left:0;top:487.7px;width:17px;height:1px;background:#d7dae3"></div>
<div class="t" style="left:-24px;top:466.6px;width:48px;text-align:center;font-size:14px;color:#222">9</div>
<div class="abs" style="left:0;top:515.8px;width:17px;height:1px;background:#d7dae3"></div>
<div class="t" style="left:-24px;top:494.8px;width:48px;text-align:center;font-size:14px;color:#222">10</div>
<div class="abs" style="left:0;top:543.9px;width:17px;height:1px;background:#d7dae3"></div>
<div class="t" style="left:-24px;top:522.9px;width:48px;text-align:center;font-size:14px;color:#222">11</div>
<div class="abs" style="left:0;top:572.1px;width:17px;height:1px;background:#d7dae3"></div>
<div class="t" style="left:-24px;top:551.0px;width:48px;text-align:center;font-size:14px;color:#222">12</div>
<div class="abs" style="left:0;top:599.5px;width:17px;height:1px;background:#d7dae3"></div>
<div class="t" style="left:-24px;top:578.8px;width:48px;text-align:center;font-size:14px;color:#222">13</div>
<div class="abs" style="left:0;top:631.5px;width:17px;height:1px;background:#d7dae3"></div>
<div class="t" style="left:-24px;top:608.5px;width:48px;text-align:center;font-size:14px;color:#222">14</div>
<div class="abs" style="left:0;top:663.5px;width:17px;height:1px;background:#d7dae3"></div>
<div class="t" style="left:-24px;top:640.5px;width:48px;text-align:center;font-size:14px;color:#222">15</div>
<div class="abs" style="left:0;top:695.5px;width:17px;height:1px;background:#d7dae3"></div>
<div class="t" style="left:-24px;top:672.5px;width:48px;text-align:center;font-size:14px;color:#222">16</div>
<div class="abs" style="left:0;top:727.5px;width:17px;height:1px;background:#d7dae3"></div>
<div class="t" style="left:-24px;top:704.5px;width:48px;text-align:center;font-size:14px;color:#222">17</div>
<div class="abs" style="left:0;top:759.5px;width:17px;height:1px;background:#d7dae3"></div>
<div class="t" style="left:-24px;top:736.5px;width:48px;text-align:center;font-size:14px;color:#222">18</div>
<div class="abs" style="left:0;top:791.5px;width:17px;height:1px;background:#d7dae3"></div>
<div class="t" style="left:-24px;top:768.5px;width:48px;text-align:center;font-size:14px;color:#222">19</div>
<div class="abs" style="left:0;top:823.5px;width:17px;height:1px;background:#d7dae3"></div>
<div class="t" style="left:-24px;top:800.5px;width:48px;text-align:center;font-size:14px;color:#222">20</div>
<div class="abs" style="left:0;top:855.5px;width:17px;height:1px;background:#d7dae3"></div>
<div class="t" style="left:-24px;top:832.5px;width:48px;text-align:center;font-size:14px;color:#222">21</div>
<div class="abs" style="left:0;top:856.0px;width:17px;height:32.0px;background:#d5d7dd;border-right:2px solid #22b574"></div>
<div class="abs" style="left:0;top:887.5px;width:17px;height:1px;background:#d7dae3"></div>
<div class="t" style="left:-24px;top:864.5px;width:48px;text-align:center;font-size:14px;color:#222">22</div>
<div class="abs" style="left:0;top:919.5px;width:17px;height:1px;background:#d7dae3"></div>
<div class="t" style="left:-24px;top:896.5px;width:48px;text-align:center;font-size:14px;color:#222">23</div>
<div class="abs" style="left:0;top:951.5px;width:17px;height:1px;background:#d7dae3"></div>
<div class="t" style="left:-24px;top:928.5px;width:48px;text-align:center;font-size:14px;color:#222">24</div>
<div class="abs" style="left:0;top:983.5px;width:17px;height:1px;background:#d7dae3"></div>
<div class="t" style="left:-24px;top:960.5px;width:48px;text-align:center;font-size:14px;color:#222">25</div>
<div class="t" style="left:46px;top:240px;width:1140px;text-align:center;font-size:32px;font-weight:bold;color:#000;-webkit-text-stroke:0.5px #000">年度成本费用预算明细表</div>
<div class="t" style="left:1108px;top:291px;font-size:15px;color:#000">单位<span style="display:inline-block;width:14.5px;text-align:center;position:relative;left:0px">:</span>万元</div>
<div class="abs" style="left:46px;top:310.5px;width:1140.3px;height:36.6px;background:#7e62a0"></div>
<div class="t" style="left:46.0px;top:323.2px;width:87.5px;text-align:center;font-size:14.5px;font-weight:bold;color:#fff;letter-spacing:3px;text-indent:3px">费用类型</div>
<div class="abs" style="left:133.0px;top:310.5px;width:1px;height:36.6px;background:#fff"></div>
<div class="t" style="left:133.5px;top:323.2px;width:80.8px;text-align:center;font-size:14.5px;font-weight:bold;color:#fff;letter-spacing:0.8px;text-indent:0.8px">1月</div>
<div class="abs" style="left:213.8px;top:310.5px;width:1px;height:36.6px;background:#fff"></div>
<div class="t" style="left:214.3px;top:323.2px;width:81.0px;text-align:center;font-size:14.5px;font-weight:bold;color:#fff;letter-spacing:0.8px;text-indent:0.8px">2月</div>
<div class="abs" style="left:294.8px;top:310.5px;width:1px;height:36.6px;background:#fff"></div>
<div class="t" style="left:295.3px;top:323.2px;width:81.0px;text-align:center;font-size:14.5px;font-weight:bold;color:#fff;letter-spacing:0.8px;text-indent:0.8px">3月</div>
<div class="abs" style="left:375.8px;top:310.5px;width:1px;height:36.6px;background:#fff"></div>
<div class="t" style="left:376.3px;top:323.2px;width:81.0px;text-align:center;font-size:14.5px;font-weight:bold;color:#fff;letter-spacing:0.8px;text-indent:0.8px">4月</div>
<div class="abs" style="left:456.8px;top:310.5px;width:1px;height:36.6px;background:#fff"></div>
<div class="t" style="left:457.3px;top:323.2px;width:81.0px;text-align:center;font-size:14.5px;font-weight:bold;color:#fff;letter-spacing:0.8px;text-indent:0.8px">5月</div>
<div class="abs" style="left:537.8px;top:310.5px;width:1px;height:36.6px;background:#fff"></div>
<div class="t" style="left:538.3px;top:323.2px;width:81.0px;text-align:center;font-size:14.5px;font-weight:bold;color:#fff;letter-spacing:0.8px;text-indent:0.8px">6月</div>
<div class="abs" style="left:618.8px;top:310.5px;width:1px;height:36.6px;background:#fff"></div>
<div class="t" style="left:619.3px;top:323.2px;width:81.0px;text-align:center;font-size:14.5px;font-weight:bold;color:#fff;letter-spacing:0.8px;text-indent:0.8px">7月</div>
<div class="abs" style="left:699.8px;top:310.5px;width:1px;height:36.6px;background:#fff"></div>
<div class="t" style="left:700.3px;top:323.2px;width:81.0px;text-align:center;font-size:14.5px;font-weight:bold;color:#fff;letter-spacing:0.8px;text-indent:0.8px">8月</div>
<div class="abs" style="left:780.8px;top:310.5px;width:1px;height:36.6px;background:#fff"></div>
<div class="t" style="left:781.3px;top:323.2px;width:81.0px;text-align:center;font-size:14.5px;font-weight:bold;color:#fff;letter-spacing:0.8px;text-indent:0.8px">9月</div>
<div class="abs" style="left:861.8px;top:310.5px;width:1px;height:36.6px;background:#fff"></div>
<div class="t" style="left:862.3px;top:323.2px;width:81.0px;text-align:center;font-size:14.5px;font-weight:bold;color:#fff;letter-spacing:0.8px;text-indent:0.8px">10月</div>
<div class="abs" style="left:942.8px;top:310.5px;width:1px;height:36.6px;background:#fff"></div>
<div class="t" style="left:943.3px;top:323.2px;width:81.0px;text-align:center;font-size:14.5px;font-weight:bold;color:#fff;letter-spacing:0.8px;text-indent:0.8px">11月</div>
<div class="abs" style="left:1023.8px;top:310.5px;width:1px;height:36.6px;background:#fff"></div>
<div class="t" style="left:1024.3px;top:323.2px;width:81.0px;text-align:center;font-size:14.5px;font-weight:bold;color:#fff;letter-spacing:0.8px;text-indent:0.8px">12月</div>
<div class="abs" style="left:1104.8px;top:310.5px;width:1px;height:36.6px;background:#fff"></div>
<div class="t" style="left:1105.3px;top:323.2px;width:81.0px;text-align:center;font-size:14.5px;font-weight:bold;color:#fff;letter-spacing:1px;text-indent:1px">合计</div>
<div class="abs" style="left:46px;top:374.7px;width:1140.3px;height:1px;background:#c9c9c9"></div>
<div class="abs" style="left:46px;top:402.8px;width:1140.3px;height:1px;background:#c9c9c9"></div>
<div class="abs" style="left:46px;top:431.0px;width:1140.3px;height:1px;background:#c9c9c9"></div>
<div class="abs" style="left:46px;top:459.1px;width:1140.3px;height:1px;background:#c9c9c9"></div>
<div class="abs" style="left:46px;top:487.2px;width:1140.3px;height:1px;background:#c9c9c9"></div>
<div class="abs" style="left:46px;top:515.3px;width:1140.3px;height:1px;background:#c9c9c9"></div>
<div class="abs" style="left:46px;top:543.4px;width:1140.3px;height:1px;background:#c9c9c9"></div>
<div class="abs" style="left:46px;top:571.6px;width:1140.3px;height:1px;background:#c9c9c9"></div>
<div class="abs" style="left:45.5px;top:347.1px;width:1px;height:225.0px;background:#c9c9c9"></div>
<div class="abs" style="left:133.0px;top:347.1px;width:1px;height:225.0px;background:#c9c9c9"></div>
<div class="abs" style="left:213.8px;top:347.1px;width:1px;height:225.0px;background:#c9c9c9"></div>
<div class="abs" style="left:294.8px;top:347.1px;width:1px;height:225.0px;background:#c9c9c9"></div>
<div class="abs" style="left:375.8px;top:347.1px;width:1px;height:225.0px;background:#c9c9c9"></div>
<div class="abs" style="left:456.8px;top:347.1px;width:1px;height:225.0px;background:#c9c9c9"></div>
<div class="abs" style="left:537.8px;top:347.1px;width:1px;height:225.0px;background:#c9c9c9"></div>
<div class="abs" style="left:618.8px;top:347.1px;width:1px;height:225.0px;background:#c9c9c9"></div>
<div class="abs" style="left:699.8px;top:347.1px;width:1px;height:225.0px;background:#c9c9c9"></div>
<div class="abs" style="left:780.8px;top:347.1px;width:1px;height:225.0px;background:#c9c9c9"></div>
<div class="abs" style="left:861.8px;top:347.1px;width:1px;height:225.0px;background:#c9c9c9"></div>
<div class="abs" style="left:942.8px;top:347.1px;width:1px;height:225.0px;background:#c9c9c9"></div>
<div class="abs" style="left:1023.8px;top:347.1px;width:1px;height:225.0px;background:#c9c9c9"></div>
<div class="abs" style="left:1104.8px;top:347.1px;width:1px;height:225.0px;background:#c9c9c9"></div>
<div class="abs" style="left:1185.8px;top:347.1px;width:1px;height:225.0px;background:#c9c9c9"></div>
<div class="t" style="left:46px;top:355.9px;width:87.5px;text-align:center;font-size:15px;font-weight:bold;color:#000;letter-spacing:1.9px;text-indent:1.9px;transform:scaleY(0.9);-webkit-text-stroke:0.12px #000">差旅费</div>
<div class="t" style="left:133.5px;top:354.3px;width:80.8px;text-align:center;font-size:16px;color:#000">20.00</div>
<div class="t" style="left:214.3px;top:354.3px;width:81.0px;text-align:center;font-size:16px;color:#000">40.00</div>
<div class="t" style="left:295.3px;top:354.3px;width:81.0px;text-align:center;font-size:16px;color:#000">30.00</div>
<div class="t" style="left:376.3px;top:354.3px;width:81.0px;text-align:center;font-size:16px;color:#000">25.00</div>
<div class="t" style="left:457.3px;top:354.3px;width:81.0px;text-align:center;font-size:16px;color:#000">25.00</div>
<div class="t" style="left:538.3px;top:354.3px;width:81.0px;text-align:center;font-size:16px;color:#000">15.00</div>
<div class="t" style="left:619.3px;top:354.3px;width:81.0px;text-align:center;font-size:16px;color:#000">23.00</div>
<div class="t" style="left:700.3px;top:354.3px;width:81.0px;text-align:center;font-size:16px;color:#000">22.00</div>
<div class="t" style="left:781.3px;top:354.3px;width:81.0px;text-align:center;font-size:16px;color:#000">23.00</div>
<div class="t" style="left:862.3px;top:354.3px;width:81.0px;text-align:center;font-size:16px;color:#000">15.00</div>
<div class="t" style="left:943.3px;top:354.3px;width:81.0px;text-align:center;font-size:16px;color:#000">20.00</div>
<div class="t" style="left:1024.3px;top:354.3px;width:81.0px;text-align:center;font-size:16px;color:#000">32.00</div>
<div class="t" style="left:1105.3px;top:354.3px;width:81.0px;text-align:center;font-size:16px;color:#000">290.00</div>
<div class="t" style="left:46px;top:384.0px;width:87.5px;text-align:center;font-size:15px;font-weight:bold;color:#000;letter-spacing:1.9px;text-indent:1.9px;transform:scaleY(0.9);-webkit-text-stroke:0.12px #000">办公费</div>
<div class="t" style="left:133.5px;top:382.4px;width:80.8px;text-align:center;font-size:16px;color:#000">30.00</div>
<div class="t" style="left:214.3px;top:382.4px;width:81.0px;text-align:center;font-size:16px;color:#000">35.00</div>
<div class="t" style="left:295.3px;top:382.4px;width:81.0px;text-align:center;font-size:16px;color:#000">45.00</div>
<div class="t" style="left:376.3px;top:382.4px;width:81.0px;text-align:center;font-size:16px;color:#000">55.00</div>
<div class="t" style="left:457.3px;top:382.4px;width:81.0px;text-align:center;font-size:16px;color:#000">23.00</div>
<div class="t" style="left:538.3px;top:382.4px;width:81.0px;text-align:center;font-size:16px;color:#000">35.00</div>
<div class="t" style="left:619.3px;top:382.4px;width:81.0px;text-align:center;font-size:16px;color:#000">35.00</div>
<div class="t" style="left:700.3px;top:382.4px;width:81.0px;text-align:center;font-size:16px;color:#000">36.00</div>
<div class="t" style="left:781.3px;top:382.4px;width:81.0px;text-align:center;font-size:16px;color:#000">38.00</div>
<div class="t" style="left:862.3px;top:382.4px;width:81.0px;text-align:center;font-size:16px;color:#000">40.00</div>
<div class="t" style="left:943.3px;top:382.4px;width:81.0px;text-align:center;font-size:16px;color:#000">42.00</div>
<div class="t" style="left:1024.3px;top:382.4px;width:81.0px;text-align:center;font-size:16px;color:#000">55.00</div>
<div class="t" style="left:1105.3px;top:382.4px;width:81.0px;text-align:center;font-size:16px;color:#000">469.00</div>
<div class="t" style="left:46px;top:412.1px;width:87.5px;text-align:center;font-size:15px;font-weight:bold;color:#000;letter-spacing:1.9px;text-indent:1.9px;transform:scaleY(0.9);-webkit-text-stroke:0.12px #000">招待费</div>
<div class="t" style="left:133.5px;top:410.5px;width:80.8px;text-align:center;font-size:16px;color:#000">52.00</div>
<div class="t" style="left:214.3px;top:410.5px;width:81.0px;text-align:center;font-size:16px;color:#000">36.00</div>
<div class="t" style="left:295.3px;top:410.5px;width:81.0px;text-align:center;font-size:16px;color:#000">45.00</div>
<div class="t" style="left:376.3px;top:410.5px;width:81.0px;text-align:center;font-size:16px;color:#000">49.00</div>
<div class="t" style="left:457.3px;top:410.5px;width:81.0px;text-align:center;font-size:16px;color:#000">36.00</div>
<div class="t" style="left:538.3px;top:410.5px;width:81.0px;text-align:center;font-size:16px;color:#000">55.00</div>
<div class="t" style="left:619.3px;top:410.5px;width:81.0px;text-align:center;font-size:16px;color:#000">45.00</div>
<div class="t" style="left:700.3px;top:410.5px;width:81.0px;text-align:center;font-size:16px;color:#000">35.00</div>
<div class="t" style="left:781.3px;top:410.5px;width:81.0px;text-align:center;font-size:16px;color:#000">56.00</div>
<div class="t" style="left:862.3px;top:410.5px;width:81.0px;text-align:center;font-size:16px;color:#000">32.00</div>
<div class="t" style="left:943.3px;top:410.5px;width:81.0px;text-align:center;font-size:16px;color:#000">45.00</div>
<div class="t" style="left:1024.3px;top:410.5px;width:81.0px;text-align:center;font-size:16px;color:#000">36.00</div>
<div class="t" style="left:1105.3px;top:410.5px;width:81.0px;text-align:center;font-size:16px;color:#000">522.00</div>
<div class="t" style="left:46px;top:440.3px;width:87.5px;text-align:center;font-size:15px;font-weight:bold;color:#000;letter-spacing:1.9px;text-indent:1.9px;transform:scaleY(0.9);-webkit-text-stroke:0.12px #000">广告费</div>
<div class="t" style="left:133.5px;top:438.7px;width:80.8px;text-align:center;font-size:16px;color:#000">55.00</div>
<div class="t" style="left:214.3px;top:438.7px;width:81.0px;text-align:center;font-size:16px;color:#000">82.00</div>
<div class="t" style="left:295.3px;top:438.7px;width:81.0px;text-align:center;font-size:16px;color:#000">62.00</div>
<div class="t" style="left:376.3px;top:438.7px;width:81.0px;text-align:center;font-size:16px;color:#000">63.00</div>
<div class="t" style="left:457.3px;top:438.7px;width:81.0px;text-align:center;font-size:16px;color:#000">56.00</div>
<div class="t" style="left:538.3px;top:438.7px;width:81.0px;text-align:center;font-size:16px;color:#000">65.00</div>
<div class="t" style="left:619.3px;top:438.7px;width:81.0px;text-align:center;font-size:16px;color:#000">63.00</div>
<div class="t" style="left:700.3px;top:438.7px;width:81.0px;text-align:center;font-size:16px;color:#000">55.00</div>
<div class="t" style="left:781.3px;top:438.7px;width:81.0px;text-align:center;font-size:16px;color:#000">62.00</div>
<div class="t" style="left:862.3px;top:438.7px;width:81.0px;text-align:center;font-size:16px;color:#000">65.00</div>
<div class="t" style="left:943.3px;top:438.7px;width:81.0px;text-align:center;font-size:16px;color:#000">65.00</div>
<div class="t" style="left:1024.3px;top:438.7px;width:81.0px;text-align:center;font-size:16px;color:#000">66.00</div>
<div class="t" style="left:1105.3px;top:438.7px;width:81.0px;text-align:center;font-size:16px;color:#000">759.00</div>
<div class="t" style="left:46px;top:468.4px;width:87.5px;text-align:center;font-size:15px;font-weight:bold;color:#000;letter-spacing:1.9px;text-indent:1.9px;transform:scaleY(0.9);-webkit-text-stroke:0.12px #000">交通费</div>
<div class="t" style="left:133.5px;top:466.8px;width:80.8px;text-align:center;font-size:16px;color:#000">23.00</div>
<div class="t" style="left:214.3px;top:466.8px;width:81.0px;text-align:center;font-size:16px;color:#000">26.00</div>
<div class="t" style="left:295.3px;top:466.8px;width:81.0px;text-align:center;font-size:16px;color:#000">32.00</div>
<div class="t" style="left:376.3px;top:466.8px;width:81.0px;text-align:center;font-size:16px;color:#000">18.00</div>
<div class="t" style="left:457.3px;top:466.8px;width:81.0px;text-align:center;font-size:16px;color:#000">22.00</div>
<div class="t" style="left:538.3px;top:466.8px;width:81.0px;text-align:center;font-size:16px;color:#000">25.00</div>
<div class="t" style="left:619.3px;top:466.8px;width:81.0px;text-align:center;font-size:16px;color:#000">30.00</div>
<div class="t" style="left:700.3px;top:466.8px;width:81.0px;text-align:center;font-size:16px;color:#000">25.00</div>
<div class="t" style="left:781.3px;top:466.8px;width:81.0px;text-align:center;font-size:16px;color:#000">31.00</div>
<div class="t" style="left:862.3px;top:466.8px;width:81.0px;text-align:center;font-size:16px;color:#000">24.00</div>
<div class="t" style="left:943.3px;top:466.8px;width:81.0px;text-align:center;font-size:16px;color:#000">30.00</div>
<div class="t" style="left:1024.3px;top:466.8px;width:81.0px;text-align:center;font-size:16px;color:#000">25.00</div>
<div class="t" style="left:1105.3px;top:466.8px;width:81.0px;text-align:center;font-size:16px;color:#000">311.00</div>
<div class="t" style="left:46px;top:496.5px;width:87.5px;text-align:center;font-size:15px;font-weight:bold;color:#000;letter-spacing:1.9px;text-indent:1.9px;transform:scaleY(0.9);-webkit-text-stroke:0.12px #000">通讯费</div>
<div class="t" style="left:133.5px;top:494.9px;width:80.8px;text-align:center;font-size:16px;color:#000">10.00</div>
<div class="t" style="left:214.3px;top:494.9px;width:81.0px;text-align:center;font-size:16px;color:#000">6.00</div>
<div class="t" style="left:295.3px;top:494.9px;width:81.0px;text-align:center;font-size:16px;color:#000">7.00</div>
<div class="t" style="left:376.3px;top:494.9px;width:81.0px;text-align:center;font-size:16px;color:#000">8.00</div>
<div class="t" style="left:457.3px;top:494.9px;width:81.0px;text-align:center;font-size:16px;color:#000">6.00</div>
<div class="t" style="left:538.3px;top:494.9px;width:81.0px;text-align:center;font-size:16px;color:#000">7.00</div>
<div class="t" style="left:619.3px;top:494.9px;width:81.0px;text-align:center;font-size:16px;color:#000">5.00</div>
<div class="t" style="left:700.3px;top:494.9px;width:81.0px;text-align:center;font-size:16px;color:#000">8.00</div>
<div class="t" style="left:781.3px;top:494.9px;width:81.0px;text-align:center;font-size:16px;color:#000">5.00</div>
<div class="t" style="left:862.3px;top:494.9px;width:81.0px;text-align:center;font-size:16px;color:#000">6.00</div>
<div class="t" style="left:943.3px;top:494.9px;width:81.0px;text-align:center;font-size:16px;color:#000">8.00</div>
<div class="t" style="left:1024.3px;top:494.9px;width:81.0px;text-align:center;font-size:16px;color:#000">10.00</div>
<div class="t" style="left:1105.3px;top:494.9px;width:81.0px;text-align:center;font-size:16px;color:#000">86.00</div>
<div class="t" style="left:46px;top:524.6px;width:87.5px;text-align:center;font-size:15px;font-weight:bold;color:#000;letter-spacing:1.9px;text-indent:1.9px;transform:scaleY(0.9);-webkit-text-stroke:0.12px #000">折旧费</div>
<div class="t" style="left:133.5px;top:523.0px;width:80.8px;text-align:center;font-size:16px;color:#000">5.00</div>
<div class="t" style="left:214.3px;top:523.0px;width:81.0px;text-align:center;font-size:16px;color:#000">8.00</div>
<div class="t" style="left:295.3px;top:523.0px;width:81.0px;text-align:center;font-size:16px;color:#000">9.00</div>
<div class="t" style="left:376.3px;top:523.0px;width:81.0px;text-align:center;font-size:16px;color:#000">6.00</div>
<div class="t" style="left:457.3px;top:523.0px;width:81.0px;text-align:center;font-size:16px;color:#000">7.00</div>
<div class="t" style="left:538.3px;top:523.0px;width:81.0px;text-align:center;font-size:16px;color:#000">5.00</div>
<div class="t" style="left:619.3px;top:523.0px;width:81.0px;text-align:center;font-size:16px;color:#000">6.00</div>
<div class="t" style="left:700.3px;top:523.0px;width:81.0px;text-align:center;font-size:16px;color:#000">7.00</div>
<div class="t" style="left:781.3px;top:523.0px;width:81.0px;text-align:center;font-size:16px;color:#000">6.00</div>
<div class="t" style="left:862.3px;top:523.0px;width:81.0px;text-align:center;font-size:16px;color:#000">7.00</div>
<div class="t" style="left:943.3px;top:523.0px;width:81.0px;text-align:center;font-size:16px;color:#000">8.00</div>
<div class="t" style="left:1024.3px;top:523.0px;width:81.0px;text-align:center;font-size:16px;color:#000">8.00</div>
<div class="t" style="left:1105.3px;top:523.0px;width:81.0px;text-align:center;font-size:16px;color:#000">82.00</div>
<div class="t" style="left:46px;top:552.7px;width:87.5px;text-align:center;font-size:15px;font-weight:bold;color:#000;letter-spacing:2.6px;text-indent:2.6px;transform:scaleY(0.9);-webkit-text-stroke:0.12px #000">合计</div>
<div class="t" style="left:133.5px;top:551.1px;width:80.8px;text-align:center;font-size:16px;color:#000">195.00</div>
<div class="t" style="left:214.3px;top:551.1px;width:81.0px;text-align:center;font-size:16px;color:#000">233.00</div>
<div class="t" style="left:295.3px;top:551.1px;width:81.0px;text-align:center;font-size:16px;color:#000">230.00</div>
<div class="t" style="left:376.3px;top:551.1px;width:81.0px;text-align:center;font-size:16px;color:#000">224.00</div>
<div class="t" style="left:457.3px;top:551.1px;width:81.0px;text-align:center;font-size:16px;color:#000">175.00</div>
<div class="t" style="left:538.3px;top:551.1px;width:81.0px;text-align:center;font-size:16px;color:#000">207.00</div>
<div class="t" style="left:619.3px;top:551.1px;width:81.0px;text-align:center;font-size:16px;color:#000">207.00</div>
<div class="t" style="left:700.3px;top:551.1px;width:81.0px;text-align:center;font-size:16px;color:#000">188.00</div>
<div class="t" style="left:781.3px;top:551.1px;width:81.0px;text-align:center;font-size:16px;color:#000">221.00</div>
<div class="t" style="left:862.3px;top:551.1px;width:81.0px;text-align:center;font-size:16px;color:#000">189.00</div>
<div class="t" style="left:943.3px;top:551.1px;width:81.0px;text-align:center;font-size:16px;color:#000">218.00</div>
<div class="t" style="left:1024.3px;top:551.1px;width:81.0px;text-align:center;font-size:16px;color:#000">232.00</div>
<div class="t" style="left:1105.3px;top:551.1px;width:81.0px;text-align:center;font-size:16px;color:#000">2,519.00</div>
<svg style="left:0;top:0" width="1286" height="987" viewBox="0 0 1286 987"><path d="M168.79 608.84 A126.30 126.30 0 0 1 194.56 609.90 L193.03 620.49 A115.60 115.60 0 0 0 169.44 619.52 Z" fill="#453850"/><path d="M169.45 619.62 A115.50 115.50 0 0 1 194.15 620.76 L192.52 631.33 A104.80 104.80 0 0 0 170.10 630.30 Z" fill="#5f4a7a"/><path d="M170.11 630.40 A104.70 104.70 0 0 1 245.12 655.82 L238.10 663.90 A94.00 94.00 0 0 0 170.76 641.08 Z" fill="#b09fc6"/><path d="M170.77 641.18 A93.90 93.90 0 0 1 267.21 759.16 L256.88 756.39 A83.20 83.20 0 0 0 171.42 651.86 Z" fill="#cbbfd9"/><path d="M171.43 651.95 A83.10 83.10 0 0 1 255.12 707.98 L245.00 711.45 A72.40 72.40 0 0 0 172.08 662.64 Z" fill="#e4dfec"/><path d="M172.09 662.73 A72.30 72.30 0 0 1 241.22 702.67 L231.64 707.44 A61.60 61.60 0 0 0 172.74 673.41 Z" fill="#7f63a1"/><path d="M172.75 673.51 A61.50 61.50 0 0 1 214.32 686.40 L207.74 694.84 A50.80 50.80 0 0 0 173.40 684.19 Z" fill="#b9a9cf"/></svg>
<div class="t" style="left:99.6px;top:608.4px;width:50px;text-align:right;font-size:12px;color:#222">折旧费</div>
<div class="t" style="left:98.7px;top:626.1px;width:50px;text-align:right;font-size:12px;color:#222">通讯费</div>
<div class="t" style="left:98.2px;top:642.1px;width:50px;text-align:right;font-size:12px;color:#222">交通费</div>
<div class="t" style="left:97.5px;top:660.7px;width:50px;text-align:right;font-size:12px;color:#222">广告费</div>
<div class="t" style="left:98.7px;top:677.5px;width:50px;text-align:right;font-size:12px;color:#222">招待费</div>
<div class="t" style="left:97.9px;top:697.9px;width:50px;text-align:right;font-size:12px;color:#222">办公费</div>
<div class="t" style="left:97.5px;top:718.3px;width:50px;text-align:right;font-size:12px;color:#222">差旅费</div>
<div class="t" style="left:340px;top:589.3px;width:67.5px;text-align:right;font-size:11px;color:#595959">250. 00</div>
<div class="t" style="left:340px;top:618.9px;width:67.5px;text-align:right;font-size:11px;color:#595959">200. 00</div>
<div class="t" style="left:340px;top:648.5px;width:67.5px;text-align:right;font-size:11px;color:#595959">150. 00</div>
<div class="t" style="left:340px;top:678.0px;width:67.5px;text-align:right;font-size:11px;color:#595959">100. 00</div>
<div class="t" style="left:340px;top:707.6px;width:67.5px;text-align:right;font-size:11px;color:#595959">50. 00</div>
<div class="t" style="left:340px;top:737.2px;width:67.5px;text-align:right;font-size:11px;color:#595959">0. 00</div>
<div class="abs" style="left:416px;top:742px;width:725px;height:1px;background:#d9d9d9"></div>
<div class="abs" style="left:431.5px;top:625.9px;width:29.4px;height:116.4px;background:#e4dfec;border:1px solid #e6e2ed;box-shadow:inset 0 0 0 1px #e4dfec,inset 0 0 0 2px #efecf3,3px 0 4px rgba(0,0,0,0.4)"></div>
<div class="t" style="left:426.2px;top:751.5px;width:40px;text-align:center;font-size:12px;color:#595959">1月</div>
<div class="abs" style="left:491.9px;top:603.5px;width:29.4px;height:138.8px;background:#e4dfec;border:1px solid #e6e2ed;box-shadow:inset 0 0 0 1px #e4dfec,inset 0 0 0 2px #efecf3,3px 0 4px rgba(0,0,0,0.4)"></div>
<div class="t" style="left:486.6px;top:751.5px;width:40px;text-align:center;font-size:12px;color:#595959">2月</div>
<div class="abs" style="left:552.3px;top:605.2px;width:29.4px;height:137.1px;background:#e4dfec;border:1px solid #e6e2ed;box-shadow:inset 0 0 0 1px #e4dfec,inset 0 0 0 2px #efecf3,3px 0 4px rgba(0,0,0,0.4)"></div>
<div class="t" style="left:547.0px;top:751.5px;width:40px;text-align:center;font-size:12px;color:#595959">3月</div>
<div class="abs" style="left:612.8px;top:608.8px;width:29.4px;height:133.5px;background:#cbbfd9;border:1px solid #e6e2ed;box-shadow:inset 0 0 0 1px #cbbfd9,inset 0 0 0 2px #efecf3,3px 0 4px rgba(0,0,0,0.4)"></div>
<div class="t" style="left:607.5px;top:751.5px;width:40px;text-align:center;font-size:12px;color:#595959">4月</div>
<div class="abs" style="left:673.2px;top:637.8px;width:29.4px;height:104.5px;background:#cbbfd9;border:1px solid #e6e2ed;box-shadow:inset 0 0 0 1px #cbbfd9,inset 0 0 0 2px #efecf3,3px 0 4px rgba(0,0,0,0.4)"></div>
<div class="t" style="left:667.9px;top:751.5px;width:40px;text-align:center;font-size:12px;color:#595959">5月</div>
<div class="abs" style="left:733.6px;top:618.8px;width:29.4px;height:123.5px;background:#cbbfd9;border:1px solid #e6e2ed;box-shadow:inset 0 0 0 1px #cbbfd9,inset 0 0 0 2px #efecf3,3px 0 4px rgba(0,0,0,0.4)"></div>
<div class="t" style="left:728.3px;top:751.5px;width:40px;text-align:center;font-size:12px;color:#595959">6月</div>
<div class="abs" style="left:794.0px;top:618.8px;width:29.4px;height:123.5px;background:#b09fc6;border:1px solid #e6e2ed;box-shadow:inset 0 0 0 1px #b09fc6,inset 0 0 0 2px #efecf3,3px 0 4px rgba(0,0,0,0.4)"></div>
<div class="t" style="left:788.7px;top:751.5px;width:40px;text-align:center;font-size:12px;color:#595959">7月</div>
<div class="abs" style="left:854.5px;top:630.1px;width:29.4px;height:112.2px;background:#b09fc6;border:1px solid #e6e2ed;box-shadow:inset 0 0 0 1px #b09fc6,inset 0 0 0 2px #efecf3,3px 0 4px rgba(0,0,0,0.4)"></div>
<div class="t" style="left:849.2px;top:751.5px;width:40px;text-align:center;font-size:12px;color:#595959">8月</div>
<div class="abs" style="left:914.9px;top:610.6px;width:29.4px;height:131.7px;background:#b09fc6;border:1px solid #e6e2ed;box-shadow:inset 0 0 0 1px #b09fc6,inset 0 0 0 2px #efecf3,3px 0 4px rgba(0,0,0,0.4)"></div>
<div class="t" style="left:909.6px;top:751.5px;width:40px;text-align:center;font-size:12px;color:#595959">9月</div>
<div class="abs" style="left:975.3px;top:629.5px;width:29.4px;height:112.8px;background:#5f4a78;border:1px solid #e6e2ed;box-shadow:inset 0 0 0 1px #5f4a78,inset 0 0 0 2px #efecf3,3px 0 4px rgba(0,0,0,0.4)"></div>
<div class="t" style="left:970.0px;top:751.5px;width:40px;text-align:center;font-size:12px;color:#595959">10月</div>
<div class="abs" style="left:1035.7px;top:612.3px;width:29.4px;height:130.0px;background:#5f4a78;border:1px solid #e6e2ed;box-shadow:inset 0 0 0 1px #5f4a78,inset 0 0 0 2px #efecf3,3px 0 4px rgba(0,0,0,0.4)"></div>
<div class="t" style="left:1030.4px;top:751.5px;width:40px;text-align:center;font-size:12px;color:#595959">11月</div>
<div class="abs" style="left:1096.1px;top:604.0px;width:29.4px;height:138.3px;background:#5f4a78;border:1px solid #e6e2ed;box-shadow:inset 0 0 0 1px #5f4a78,inset 0 0 0 2px #efecf3,3px 0 4px rgba(0,0,0,0.4)"></div>
<div class="t" style="left:1090.8px;top:751.5px;width:40px;text-align:center;font-size:12px;color:#595959">12月</div>
<div class="abs" style="left:410px;top:743px;width:740px;height:8px;background:#fff"></div>
<svg style="left:0;top:0" width="1286" height="987" viewBox="0 0 1286 987"><polyline points="445.8,626.6 506.2,604.2 566.6,605.9 627.1,609.5 687.5,638.5 747.9,619.5 808.3,619.5 868.8,630.8 929.2,611.3 989.6,630.2 1050.0,613.0 1110.4,604.7" fill="none" stroke="#f29441" stroke-width="3.2" stroke-linejoin="round"/><path d="M442.3 623.1 L449.3 630.1 M449.3 623.1 L442.3 630.1" stroke="#f29441" stroke-width="1.5"/><path d="M502.7 600.7 L509.7 607.7 M509.7 600.7 L502.7 607.7" stroke="#f29441" stroke-width="1.5"/><path d="M563.1 602.4 L570.1 609.4 M570.1 602.4 L563.1 609.4" stroke="#f29441" stroke-width="1.5"/><path d="M623.6 606.0 L630.6 613.0 M630.6 606.0 L623.6 613.0" stroke="#f29441" stroke-width="1.5"/><path d="M684.0 635.0 L691.0 642.0 M691.0 635.0 L684.0 642.0" stroke="#f29441" stroke-width="1.5"/><path d="M744.4 616.0 L751.4 623.0 M751.4 616.0 L744.4 623.0" stroke="#f29441" stroke-width="1.5"/><path d="M804.8 616.0 L811.8 623.0 M811.8 616.0 L804.8 623.0" stroke="#f29441" stroke-width="1.5"/><path d="M865.3 627.3 L872.3 634.3 M872.3 627.3 L865.3 634.3" stroke="#f29441" stroke-width="1.5"/><path d="M925.7 607.8 L932.7 614.8 M932.7 607.8 L925.7 614.8" stroke="#f29441" stroke-width="1.5"/><path d="M986.1 626.7 L993.1 633.7 M993.1 626.7 L986.1 633.7" stroke="#f29441" stroke-width="1.5"/><path d="M1046.5 609.5 L1053.5 616.5 M1053.5 609.5 L1046.5 616.5" stroke="#f29441" stroke-width="1.5"/><path d="M1106.9 601.2 L1113.9 608.2 M1113.9 601.2 L1106.9 608.2" stroke="#f29441" stroke-width="1.5"/></svg>
<div class="t" style="left:20px;top:835.8px;width:51.5px;text-align:right;font-size:12px;color:#595959">800.00</div>
<div class="t" style="left:20px;top:856.2px;width:51.5px;text-align:right;font-size:12px;color:#595959">700.00</div>
<div class="t" style="left:20px;top:876.6px;width:51.5px;text-align:right;font-size:12px;color:#595959">600.00</div>
<div class="t" style="left:20px;top:896.9px;width:51.5px;text-align:right;font-size:12px;color:#595959">500.00</div>
<div class="t" style="left:20px;top:917.3px;width:51.5px;text-align:right;font-size:12px;color:#595959">400.00</div>
<div class="t" style="left:20px;top:937.7px;width:51.5px;text-align:right;font-size:12px;color:#595959">300.00</div>
<svg style="left:0;top:0" width="1286" height="987" viewBox="0 0 1286 987"><rect x="107.0" y="945.8" width="4" height="34.2" fill="#c3b4d6"/><circle cx="109.0" cy="945.8" r="18.6" fill="#7f63a1"/><rect x="165.0" y="909.4" width="4" height="70.6" fill="#c3b4d6"/><circle cx="167.0" cy="909.4" r="18.6" fill="#7f63a1"/><rect x="223.0" y="898.6" width="4" height="81.4" fill="#c3b4d6"/><circle cx="225.0" cy="898.6" r="18.6" fill="#7f63a1"/><rect x="281.3" y="850.3" width="4" height="129.7" fill="#c3b4d6"/><circle cx="283.3" cy="850.3" r="18.6" fill="#7f63a1"/><rect x="338.8" y="941.6" width="4" height="38.4" fill="#c3b4d6"/><circle cx="340.8" cy="941.6" r="18.6" fill="#7f63a1"/></svg>
<div class="t" style="left:531.2px;top:827.9px;width:80px;text-align:center;font-size:13px;color:#595959;letter-spacing:-0.3px">第一季度</div>
<div class="t" style="left:714.4px;top:826.3px;width:80px;text-align:center;font-size:13px;color:#595959;letter-spacing:-0.3px">第二季度</div>
<div class="t" style="left:896.5px;top:825.2px;width:80px;text-align:center;font-size:13px;color:#595959;letter-spacing:-0.3px">第三季度</div>
<div class="t" style="left:1094.4px;top:826.3px;width:80px;text-align:center;font-size:13px;color:#595959;letter-spacing:-0.3px">第四季度</div>
<svg style="left:0;top:0" width="1286" height="987" viewBox="0 0 1286 987"><circle cx="564.5" cy="927.5" r="71.1" fill="none" stroke="#f0f1f1" stroke-width="17.6"/><path d="M486.16 941.45 A80.30 80.30 0 0 1 559.60 843.65 L561.23 870.30 A53.60 53.60 0 0 0 512.21 935.58 Z" fill="#cbbfd9" stroke="#fff" stroke-width="1"/><circle cx="759" cy="932" r="71.1" fill="none" stroke="#f0f1f1" stroke-width="17.6"/><path d="M686.77 963.38 A80.30 80.30 0 0 1 730.22 853.33 L739.79 878.26 A53.60 53.60 0 0 0 710.78 951.71 Z" fill="#b09fc6" stroke="#fff" stroke-width="1"/><circle cx="944" cy="936" r="71.1" fill="none" stroke="#f0f1f1" stroke-width="17.6"/><path d="M872.71 969.25 A80.30 80.30 0 0 1 912.11 858.60 L922.71 883.11 A53.60 53.60 0 0 0 896.41 956.97 Z" fill="#7f63a1" stroke="#fff" stroke-width="1"/><circle cx="1135.5" cy="936" r="71.1" fill="none" stroke="#f0f1f1" stroke-width="17.6"/><path d="M1064.40 969.63 A80.30 80.30 0 0 1 1108.04 856.84 L1117.17 881.93 A53.60 53.60 0 0 0 1088.04 957.22 Z" fill="#5f4a78" stroke="#fff" stroke-width="1"/></svg>
<div class="abs" style="left:0;top:955px;width:1286px;height:22px;background:#f3f4f7;border-top:1px solid #e3e5ea"></div>
<svg style="left:3px;top:960px" width="90" height="12" viewBox="0 0 90 12" fill="none" stroke="#a4a8b3" stroke-width="1.1"><path d="M7 1 L2 6 L7 11"/><path d="M30 1 L25 6 L30 11"/><path d="M49 1 L54 6 L49 11"/><path d="M73 1 L78 6 L73 11 M81.5 1 V11"/></svg>
<div class="abs" style="left:103px;top:955px;width:72px;height:22px;background:#fff"></div>
<div class="abs" style="left:175px;top:955px;width:147px;height:22px;background:#e5e6eb"></div>
<div class="t" style="left:120px;top:961px;font-size:12px;font-weight:bold;color:#22b06e">Sheet1</div>
<div class="t" style="left:194px;top:961px;font-size:12px;color:#3c4150">Sheet2</div>
<div class="t" style="left:267px;top:961px;font-size:12px;color:#3c4150">Sheet3</div>
<svg style="left:327px;top:960px" width="13" height="13" viewBox="0 0 13 13"><path d="M6.5 0 V13 M0 6.5 H13" stroke="#3c4150" stroke-width="1.2"/></svg>
<svg style="left:791px;top:961px" width="4" height="10" viewBox="0 0 4 10"><path d="M0.5 0 V10 M3.5 0 V10" stroke="#a4a8b3" stroke-width="0.9"/></svg>
<div class="abs" style="left:800px;top:956px;width:486px;height:21px;background:#eceef2"></div>
<svg style="left:807px;top:963px" width="5" height="7" viewBox="0 0 5 7"><path d="M5 0 V7 L0 3.5Z" fill="#7c818c"/></svg>
<div class="abs" style="left:821px;top:960px;width:449px;height:12px;background:#d5d8e0;border-radius:6px"></div>
<div class="abs" style="left:0;top:977px;width:1286px;height:10px;background:#f3f4f7;border-top:1px solid #e3e5ea"></div>
<div class="abs" style="left:1037px;top:978.5px;width:23px;height:9px;background:#e1e3e8;border-radius:2px 2px 0 0"></div>
<svg style="left:0;top:978px" width="1286" height="9" viewBox="0 0 1286 9" fill="none" stroke="#3b4150" stroke-width="1"><circle cx="4" cy="9" r="4"/><path d="M9 6.5 H15 V9"/><path d="M30.5 6 V9" stroke="#d0d3da"/><path d="M971.5 3 V7 M965 5 L967 7 M978 5 L976 7"/><path d="M991.5 3 V9 M994.5 3 V9 M991.5 3 H994.5"/><path d="M1026.5 5 V9 M1123.5 5 V9" stroke="#d0d3da"/><path d="M1041 9 V5.5 H1057 V9 M1046.5 5.5 V9 M1051.5 5.5 V9"/><path d="M1066 9 V5.5 H1082 V9 M1069 8 H1079"/><path d="M1092 9 V5.5 H1108 V9 M1097.5 5.5 V9 M1102.5 5.5 V9"/><path d="M1136 9 V6 L1134.5 7 M1141 7.5 A2 2.5 0 0 1 1145 7.5 V9 M1148 7.5 A2 2.5 0 0 1 1152 7.5 V9 M1156 9 L1163 5"/><circle cx="1281" cy="12" r="6"/></svg>
</body></html>
